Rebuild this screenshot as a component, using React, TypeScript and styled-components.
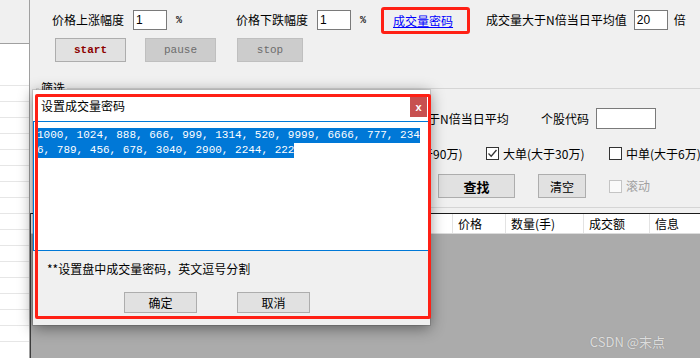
import styled, { createGlobalStyle } from "styled-components";

const CJK = `"Noto Sans CJK SC", "Noto Sans", sans-serif`;
const MONO = `"Liberation Mono", "DejaVu Sans Mono", monospace`;

const GlobalStyle = createGlobalStyle`
  html, body {
    margin: 0;
    padding: 0;
  }
  body {
    font-family: ${CJK};
    font-size: 12px;
    color: #000;
  }
`;

const passwordLines = [
  "1000, 1024, 888, 666, 999, 1314, 520, 9999, 6666, 777, 234",
  "6, 789, 456, 678, 3040, 2900, 2244, 222",
];

const columns = [
  { title: "时间", w: 100 },
  { title: "代码", w: 80 },
  { title: "名称", w: 90 },
  { title: "方向", w: 151 },
  { title: "价格", w: 53 },
  { title: "数量(手)", w: 78 },
  { title: "成交额", w: 66 },
  { title: "信息", w: 80 },
];

const stripRows = Array.from({ length: 17 });

export default function App() {
  return (
    <>
      <GlobalStyle />
      <Page>
        <LeftStrip>
          <StripHeader />
          <StripGap />
          {stripRows.map((_, i) => (
            <StripRow key={i} />
          ))}
        </LeftStrip>

        <Main>
          <TopPanel>
            <ParamRow>
              <FieldLabel>价格上涨幅度</FieldLabel>
              <NumInput $ml={9} $w={34} readOnly value="1" />
              <Unit $ml={9}>%</Unit>
              <FieldLabel $ml={50}>价格下跌幅度</FieldLabel>
              <NumInput $ml={9} $w={34} readOnly value="1" />
              <Unit $ml={9}>%</Unit>
              <LinkBox>
                <PasswordLink>成交量密码</PasswordLink>
              </LinkBox>
              <FieldLabel $ml={16}>成交量大于N倍当日平均值</FieldLabel>
              <NumInput $ml={7} $w={34} readOnly value="20" />
              <FieldLabel $ml={6}>倍</FieldLabel>
            </ParamRow>

            <ButtonRow>
              <CtrlButton $w={71}>start</CtrlButton>
              <CtrlButton $w={71} $ml={19} $disabled>
                pause
              </CtrlButton>
              <CtrlButton $w={66} $ml={21} $disabled>
                stop
              </CtrlButton>
            </ButtonRow>

            <GroupBox>
              <GroupLegend>筛选</GroupLegend>
              <FilterRow $pl={391} $h={21}>
                <FieldLabel $w={113}>于N倍当日平均</FieldLabel>
                <FieldLabel>个股代码</FieldLabel>
                <NumInput $ml={7} $w={60} $h={21} readOnly value="" />
              </FilterRow>
              <FilterRow $pl={315} $h={21} $mt={14}>
                <CheckItem $w={134}>
                  <CheckBox />
                  特大单(大于90万)
                </CheckItem>
                <CheckItem $w={123}>
                  <CheckBox>
                    <svg width="11" height="11" viewBox="0 0 11 11">
                      <polyline
                        points="1.5,5.5 4.2,8.2 9.5,2"
                        fill="none"
                        stroke="#333"
                        strokeWidth="1.3"
                      />
                    </svg>
                  </CheckBox>
                  大单(大于30万)
                </CheckItem>
                <CheckItem>
                  <CheckBox />
                  中单(大于6万)
                </CheckItem>
              </FilterRow>
              <FilterRow $pl={401} $h={24} $mt={10}>
                <ActionButton $w={77} $bold>
                  查找
                </ActionButton>
                <ActionButton $w={48} $ml={23}>
                  清空
                </ActionButton>
                <CheckItem $ml={23} $disabled>
                  <CheckBox $disabled />
                  滚动
                </CheckItem>
              </FilterRow>
            </GroupBox>
          </TopPanel>

          <Table>
            <HeaderRow>
              {columns.map((c, i) => (
                <HeaderCell key={c.title} $w={c.w} $first={i === 0}>
                  {c.title}
                </HeaderCell>
              ))}
            </HeaderRow>
            <TableBody>
              <Watermark>CSDN @末点</Watermark>
            </TableBody>
          </Table>
        </Main>

        <Dialog>
          <TitleBar>
            <DialogTitle>设置成交量密码</DialogTitle>
            <CloseButton>x</CloseButton>
          </TitleBar>
          <PasswordArea>
            {passwordLines.map((line) => (
              <PasswordLine key={line}>
                <Selected>{line}</Selected>
              </PasswordLine>
            ))}
          </PasswordArea>
          <DialogFooter>
            <Hint>**设置盘中成交量密码，英文逗号分割</Hint>
            <DialogButtons>
              <DialogButton>确定</DialogButton>
              <DialogButton $ml={40}>取消</DialogButton>
            </DialogButtons>
          </DialogFooter>
          <Annotation />
        </Dialog>
      </Page>
    </>
  );
}

const Page = styled.div`
  position: relative;
  display: flex;
  width: 700px;
  height: 358px;
  overflow: hidden;
  background: #f0f0f0;
`;

const LeftStrip = styled.div`
  display: flex;
  flex-direction: column;
  width: 29px;
  flex-shrink: 0;
  background: #fff;
  border-right: 1px solid #a0a0a0;
`;

const StripHeader = styled.div`
  height: 43px;
  background: #f0f0f0;
  border-bottom: 1px solid #a0a0a0;
`;

const StripGap = styled.div`
  height: 41px;
`;

const StripRow = styled.div`
  height: 16px;
  flex-shrink: 0;
  box-sizing: border-box;
  border-top: 1px solid #e6e6e6;
`;

const Main = styled.div`
  flex: 1;
  min-width: 0;
  display: flex;
  flex-direction: column;
`;

const TopPanel = styled.div`
  height: 213px;
  flex-shrink: 0;
  box-sizing: border-box;
  padding-top: 7px;
  background: #f0f0f0;
  display: flex;
  flex-direction: column;
`;

const ParamRow = styled.div`
  display: flex;
  align-items: center;
  height: 26px;
  padding-left: 22px;
`;

const FieldLabel = styled.span<{ $ml?: number; $w?: number }>`
  margin-left: ${(p) => p.$ml ?? 0}px;
  ${(p) => (p.$w ? `width: ${p.$w}px;` : "")}
  flex-shrink: 0;
  white-space: nowrap;
  line-height: 16px;
`;

const NumInput = styled.input<{ $ml?: number; $w: number; $h?: number }>`
  margin: 0 0 0 ${(p) => p.$ml ?? 0}px;
  width: ${(p) => p.$w}px;
  height: ${(p) => p.$h ?? 20}px;
  box-sizing: border-box;
  flex-shrink: 0;
  padding: 0 2px;
  border: 1px solid #7a7a7a;
  background: #fff;
  font-family: "Liberation Sans", Arial, sans-serif;
  font-size: 12px;
  color: #000;
  outline: none;
`;

const Unit = styled.span<{ $ml?: number }>`
  margin-left: ${(p) => p.$ml ?? 0}px;
  width: 10px;
  font-family: ${MONO};
  font-size: 10px;
  font-weight: bold;
  color: #222;
`;

const LinkBox = styled.div`
  display: flex;
  align-items: center;
  width: 89px;
  height: 27px;
  margin-left: 11px;
  padding-left: 9px;
  box-sizing: border-box;
  border: 3px solid #ff2015;
  border-radius: 3px;
`;

const PasswordLink = styled.span`
  color: #0000ff;
  text-decoration: underline;
  white-space: nowrap;
`;

const ButtonRow = styled.div`
  display: flex;
  height: 24px;
  margin-top: 5px;
  padding-left: 25px;
`;

const CtrlButton = styled.div<{ $w: number; $ml?: number; $disabled?: boolean }>`
  display: flex;
  align-items: center;
  justify-content: center;
  width: ${(p) => p.$w}px;
  margin-left: ${(p) => p.$ml ?? 0}px;
  box-sizing: border-box;
  border: 1px solid ${(p) => (p.$disabled ? "#bfbfbf" : "#adadad")};
  background: ${(p) => (p.$disabled ? "#cccccc" : "#e1e1e1")};
  color: ${(p) => (p.$disabled ? "#6d6d6d" : "#8b0000")};
  font-family: ${MONO};
  font-size: 11px;
  font-weight: ${(p) => (p.$disabled ? "normal" : "bold")};
`;

const GroupBox = styled.div`
  position: relative;
  height: 120px;
  margin: 26px -10px 0 6px;
  padding-top: 19px;
  box-sizing: border-box;
  border: 1px solid #d5d5d5;
`;

const GroupLegend = styled.span`
  position: absolute;
  top: -9px;
  left: 2px;
  padding: 0 2px;
  line-height: 16px;
  background: #f0f0f0;
`;

const FilterRow = styled.div<{ $pl: number; $h: number; $mt?: number }>`
  display: flex;
  align-items: center;
  height: ${(p) => p.$h}px;
  margin-top: ${(p) => p.$mt ?? 0}px;
  padding-left: ${(p) => p.$pl}px;
  white-space: nowrap;
`;

const CheckItem = styled.label<{ $w?: number; $ml?: number; $disabled?: boolean }>`
  display: flex;
  align-items: center;
  gap: 4px;
  flex-shrink: 0;
  ${(p) => (p.$w ? `width: ${p.$w}px;` : "")}
  margin-left: ${(p) => p.$ml ?? 0}px;
  color: ${(p) => (p.$disabled ? "#a0a0a0" : "#000")};
  white-space: nowrap;
  line-height: 16px;
`;

const CheckBox = styled.span<{ $disabled?: boolean }>`
  display: flex;
  align-items: center;
  justify-content: center;
  width: 13px;
  height: 13px;
  flex-shrink: 0;
  box-sizing: border-box;
  border: 1px solid ${(p) => (p.$disabled ? "#c4c4c4" : "#333")};
  background: ${(p) => (p.$disabled ? "#fafafa" : "#fff")};
`;

const ActionButton = styled.div<{ $w: number; $ml?: number; $bold?: boolean }>`
  display: flex;
  align-items: center;
  justify-content: center;
  width: ${(p) => p.$w}px;
  height: 24px;
  margin-left: ${(p) => p.$ml ?? 0}px;
  flex-shrink: 0;
  box-sizing: border-box;
  border: 1px solid #adadad;
  background: #e1e1e1;
  font-size: ${(p) => (p.$bold ? 13 : 12)}px;
  font-weight: ${(p) => (p.$bold ? "bold" : "normal")};
`;

const Table = styled.div`
  flex: 1;
  display: flex;
  flex-direction: column;
  border-left: 1px solid #3c3c3c;
`;

const HeaderRow = styled.div`
  display: flex;
  height: 21px;
  box-sizing: border-box;
  border-top: 1px solid #1a1a1a;
  border-bottom: 1px solid #dcdcdc;
  background: #fff;
  white-space: nowrap;
`;

const HeaderCell = styled.div<{ $w: number; $first?: boolean }>`
  width: ${(p) => p.$w}px;
  flex-shrink: 0;
  box-sizing: border-box;
  padding-left: 5px;
  border-left: ${(p) => (p.$first ? "none" : "1px solid #e3e3e3")};
  line-height: 19px;
`;

const TableBody = styled.div`
  position: relative;
  flex: 1;
  background: #ababab;
`;

const Watermark = styled.span`
  position: absolute;
  right: 35px;
  bottom: 7px;
  font-family: ${CJK};
  font-size: 13px;
  color: rgba(255, 255, 255, 0.72);
  text-shadow: 0 0 1px rgba(0, 0, 0, 0.25);
  white-space: nowrap;
`;

const Dialog = styled.div`
  position: absolute;
  left: 33px;
  top: 90px;
  width: 397px;
  height: 235px;
  display: flex;
  flex-direction: column;
  background: #f0f0f0;
  box-shadow: 0 0 0 1px rgba(0, 0, 0, 0.12), 0 3px 14px rgba(0, 0, 0, 0.45);
`;

const TitleBar = styled.div`
  display: flex;
  align-items: center;
  height: 31px;
  flex-shrink: 0;
  padding-left: 8px;
  background: #fff;
`;

const DialogTitle = styled.span`
  white-space: nowrap;
`;

const CloseButton = styled.div`
  display: flex;
  align-items: center;
  justify-content: center;
  align-self: flex-start;
  width: 17px;
  height: 20px;
  margin: 7px 3px 0 auto;
  background: #c75050;
  color: #fff;
  font-family: "Liberation Sans", Arial, sans-serif;
  font-size: 11px;
  font-weight: bold;
`;

const PasswordArea = styled.div`
  height: 130px;
  flex-shrink: 0;
  box-sizing: border-box;
  padding: 2px 0 0 3px;
  border: 1px solid #0078d7;
  background: #fff;
`;

const PasswordLine = styled.div`
  height: 15px;
`;

const Selected = styled.span`
  display: inline-block;
  height: 15px;
  line-height: 15px;
  background: #0078d7;
  color: #fff;
  font-family: ${MONO};
  font-size: 11px;
  white-space: pre;
`;

const DialogFooter = styled.div`
  flex: 1;
  display: flex;
  flex-direction: column;
`;

const Hint = styled.div`
  margin-top: 10px;
  padding-left: 14px;
  line-height: 16px;
  white-space: nowrap;
`;

const DialogButtons = styled.div`
  display: flex;
  margin-top: 15px;
  padding-left: 91px;
`;

const DialogButton = styled.div<{ $ml?: number }>`
  display: flex;
  align-items: center;
  justify-content: center;
  width: 73px;
  height: 21px;
  margin-left: ${(p) => p.$ml ?? 0}px;
  box-sizing: border-box;
  border: 1px solid #adadad;
  background: #e1e1e1;
`;

const Annotation = styled.div`
  position: absolute;
  left: 2px;
  top: 4px;
  width: 396px;
  height: 225px;
  box-sizing: border-box;
  border: 3px solid #ff2015;
  border-radius: 2px;
  pointer-events: none;
`;
